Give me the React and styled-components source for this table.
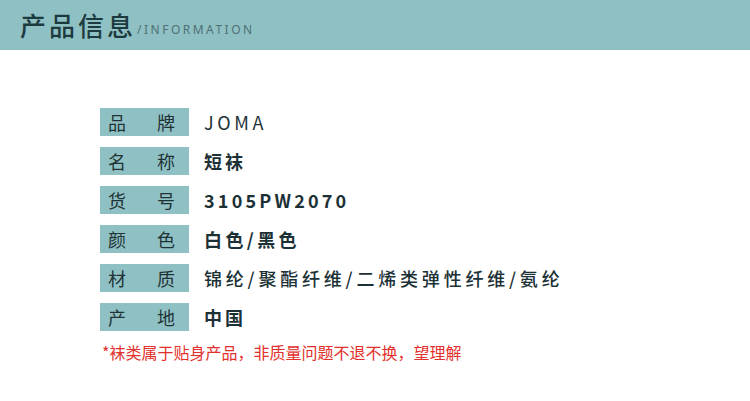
import styled, { createGlobalStyle } from 'styled-components';

const GlobalStyle = createGlobalStyle`
    body {
        margin:0;
        background:#ffffff;
        font-family:"Noto Sans CJK SC","Noto Sans",sans-serif;
    }
`;

const Page = styled.div`
    width:750px;
    height:401px;
    background:#ffffff;
    overflow:hidden;`;

const Header = styled.div`
    height:50px;
    background-color:#8fc1c4;
    display:flex;
    align-items:center;
    padding-left:20px;
    box-sizing:border-box;`;

const Title = styled.h1`
    margin:0;
    font-size:26px;
    font-weight:500;
    letter-spacing:3px;
    color:#1d3a3f;
    line-height:1;`;

const SubTitle = styled.span`
    margin-left:1px;
    margin-top:8px;
    font-family:"Noto Sans",sans-serif;
    font-size:12px;
    letter-spacing:2.5px;
    color:#4f7073;`;

const Body = styled.div`
    padding:58px 0 0 100px;
    display:flex;
    flex-direction:column;
    gap:11px;`;

const Row = styled.div`
    display:flex;
    align-items:center;
    height:28px;`;

const Label = styled.div`
    width:89px;
    height:28px;
    box-sizing:border-box;
    background-color:#8fc1c4;
    display:flex;
    align-items:center;
    justify-content:space-between;
    padding:0 14px 0 8px;
    font-size:18px;
    color:#1f3336;`;

const Value = styled.div`
    margin-left:15px;
    font-size:18px;
    letter-spacing:${p => p.$ls}px;
    font-weight:${p => p.$w};
    color:#1c3136;`;

const Note = styled.div`
    margin:-2px 0 0 2px;
    font-size:16px;
    color:#e2302c;`;

const rows = [
    ['品', '牌', 'JOMA', 400, 3.6],
    ['名', '称', '短袜', 700, 3],
    ['货', '号', '3105PW2070', 700, 3.2],
    ['颜', '色', '白色/黑色', 700, 3.4],
    ['材', '质', '锦纶/聚酯纤维/二烯类弹性纤维/氨纶', 500, 3.8],
    ['产', '地', '中国', 700, 3],
];

function App() {
    return (
        <Page>
            <GlobalStyle />
            <Header>
                <Title>产品信息</Title>
                <SubTitle>/INFORMATION</SubTitle>
            </Header>
            <Body>
                {rows.map(([a, b, v, w, ls]) => (
                    <Row key={a}>
                        <Label><span>{a}</span><span>{b}</span></Label>
                        <Value $w={w} $ls={ls}>{v}</Value>
                    </Row>
                ))}
                <Note>*袜类属于贴身产品，非质量问题不退不换，望理解</Note>
            </Body>
        </Page>
    )
}

export default App
